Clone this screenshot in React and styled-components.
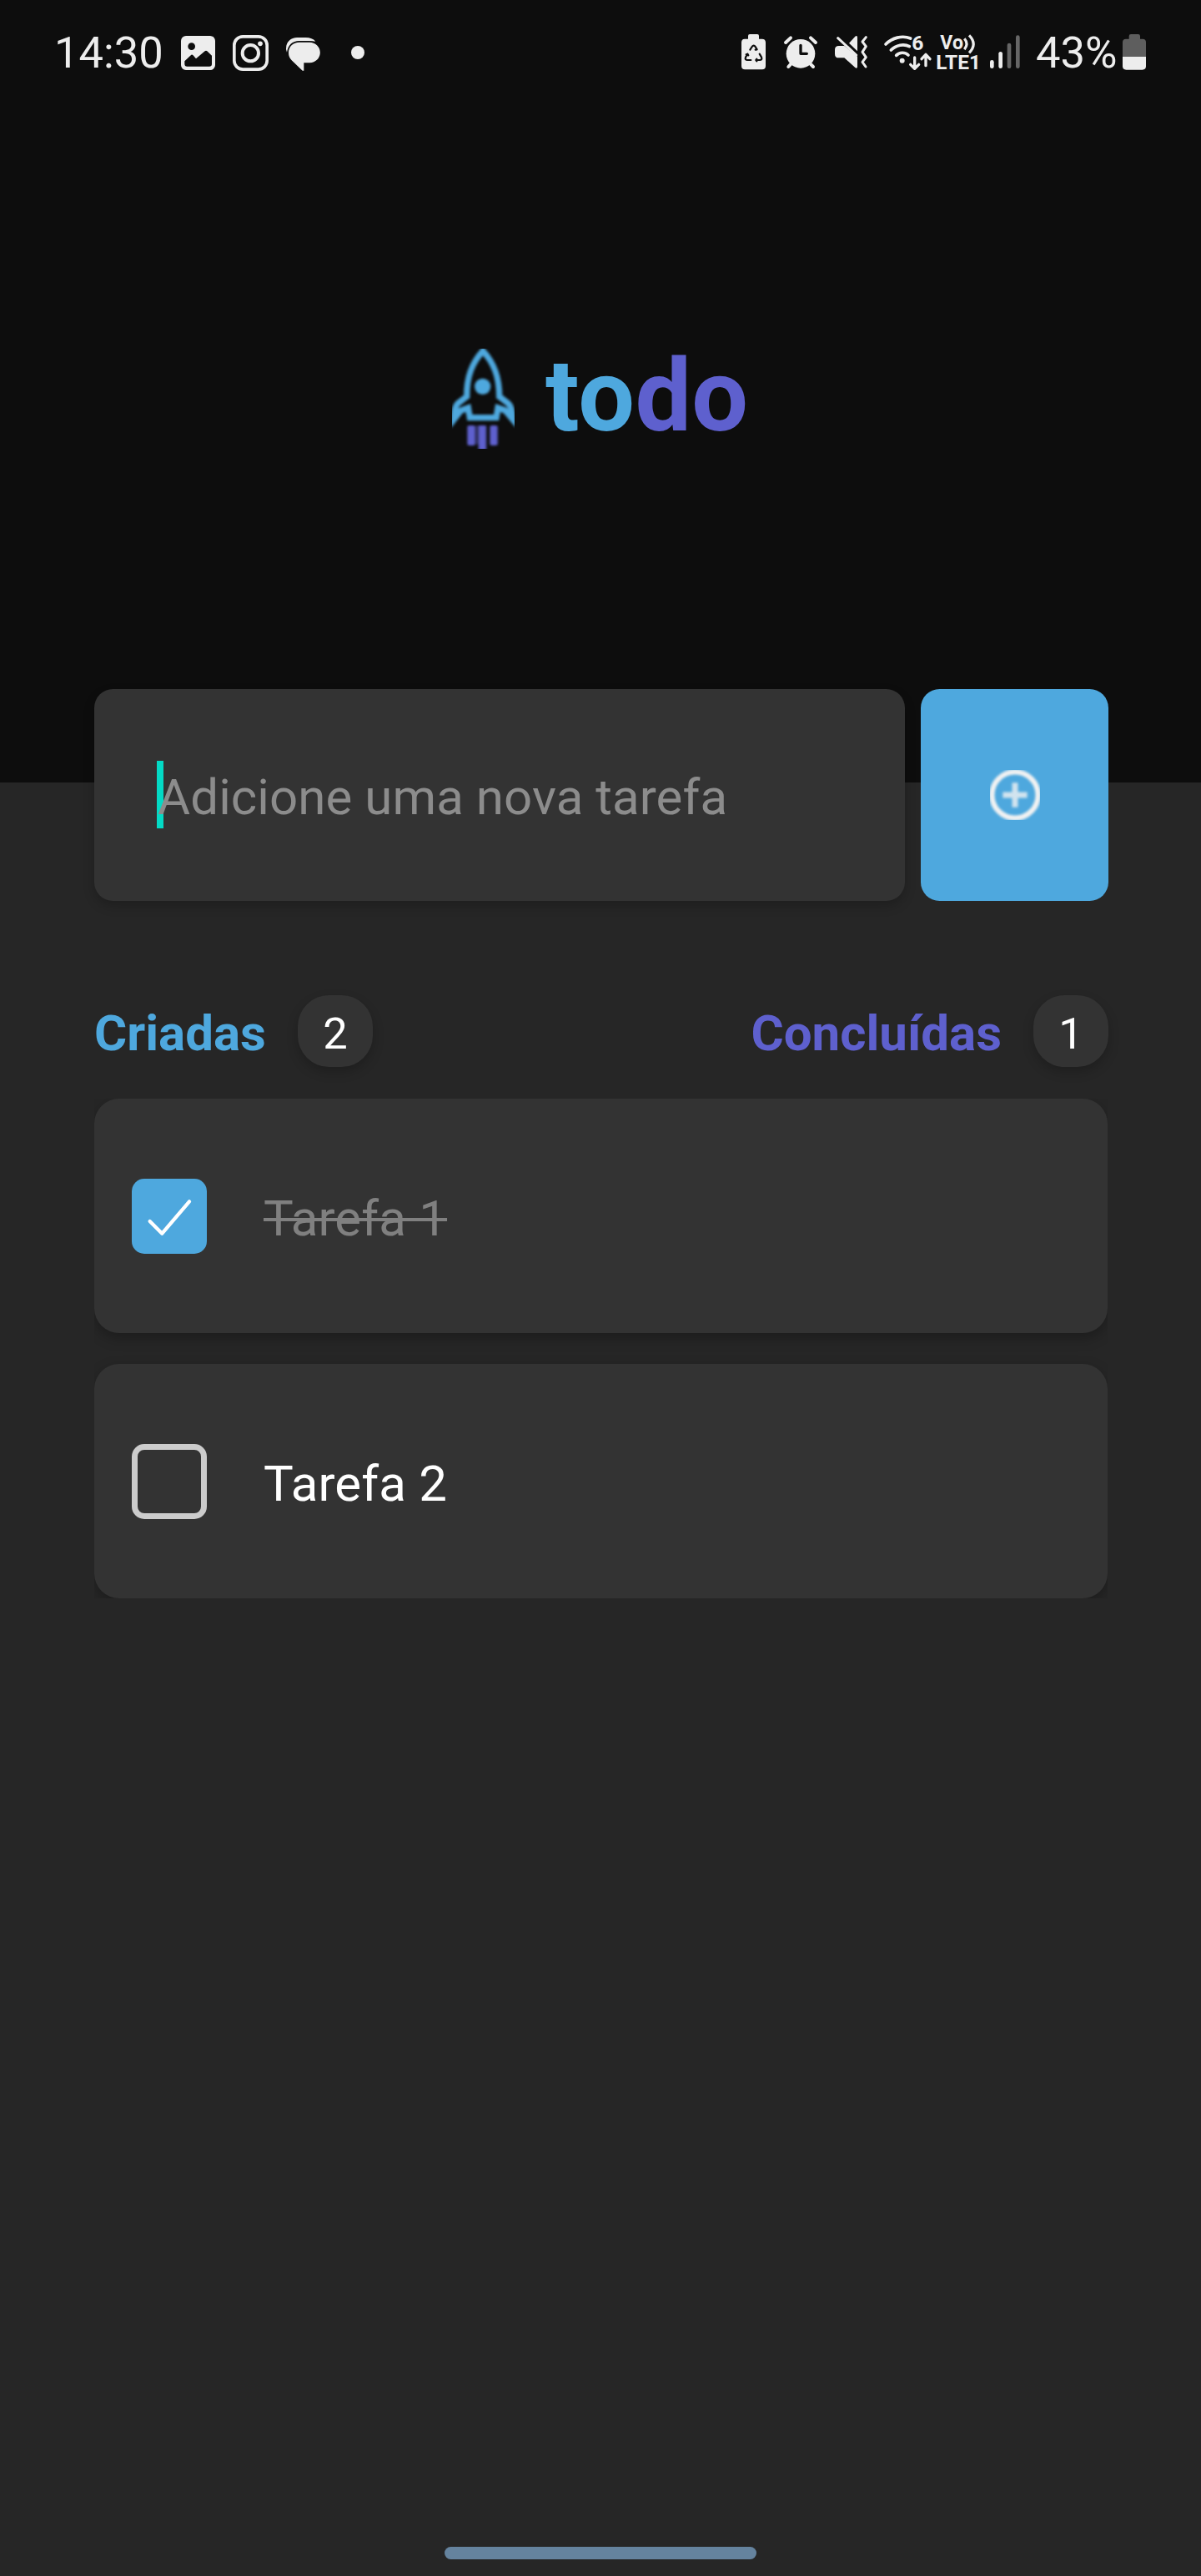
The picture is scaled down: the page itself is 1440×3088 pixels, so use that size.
import React from "react";
import styled, { createGlobalStyle } from "styled-components";

const colors = {
  header: "#0d0d0d",
  page: "#262626",
  surface: "#333333",
  blue: "#4ea8de",
  purple: "#5e60ce",
  muted: "#808080",
  status: "#ededed",
};

const GlobalStyle = createGlobalStyle`
  *, *::before, *::after { box-sizing: border-box; }
  html, body { margin: 0; background: ${colors.page}; }
  body { font-family: Roboto, "Liberation Sans", sans-serif; }
`;

const Screen = styled.div`
  width: 1440px;
  height: 3088px;
  display: flex;
  flex-direction: column;
  background: ${colors.page};
  overflow: hidden;
`;

const Header = styled.header`
  height: 938px;
  flex: none;
  background: ${colors.header};
`;

const StatusBar = styled.div`
  height: 126px;
  padding: 0 66px 0 65px;
  display: flex;
  align-items: center;
  justify-content: space-between;
  color: ${colors.status};
  font-size: 52.5px;
  line-height: 62px;
`;

const StatusGroup = styled.div`
  display: flex;
  align-items: center;
`;

const StatusText = styled.span`
  width: ${(p) => p.$width}px;
  margin-left: ${(p) => p.$gap || 0}px;
  white-space: nowrap;
`;

const Glyph = styled.svg`
  display: block;
  flex: none;
  height: 48px;
  width: ${(p) => p.$width}px;
  margin-left: ${(p) => p.$gap}px;
  overflow: visible;
  font-family: Roboto, "Liberation Sans", sans-serif;
`;

const Brand = styled.div`
  margin-top: 292px;
  padding-left: 542px;
  height: 120px;
  display: flex;
  align-items: center;
`;

const Rocket = styled.svg`
  width: 75px;
  height: 120px;
  overflow: hidden;
`;

const BrandName = styled.h1`
  margin: 0 0 6px 37px;
  font-size: 120px;
  line-height: 140px;
  font-weight: 700;
  letter-spacing: 0.3px;
  color: ${colors.purple};
`;

const BrandAccent = styled.span`
  color: ${colors.blue};
`;

const Content = styled.main`
  flex: 1;
  padding: 0 112px 0 113px;
  display: flex;
  flex-direction: column;
`;

const AddForm = styled.div`
  display: flex;
  gap: 19px;
  height: 254px;
  margin: -112px -1px 0 0;
`;

const Field = styled.div`
  position: relative;
  width: 972px;
  padding: 5px 0 0 76px;
  display: flex;
  align-items: center;
  border-radius: 22.5px;
  background: ${colors.surface};
  box-shadow: 0 6px 14px rgba(0, 0, 0, 0.2);
`;

const Caret = styled.span`
  position: absolute;
  left: 75px;
  top: 86px;
  width: 8px;
  height: 81px;
  background: #03dac5;
`;

const Placeholder = styled.span`
  position: relative;
  font-size: 60px;
  line-height: 70px;
  letter-spacing: 0.08px;
  color: #8c8c8c;
`;

const AddButton = styled.button`
  width: 225px;
  padding: 0;
  border: 0;
  border-radius: 22.5px;
  background: ${colors.blue};
  display: flex;
  align-items: center;
  justify-content: center;
`;

const PlusIcon = styled.svg`
  width: 60px;
  height: 60px;
`;

const Summary = styled.div`
  margin: 113px -1px 38px 0;
  height: 86px;
  display: flex;
  justify-content: space-between;
`;

const Counter = styled.div`
  display: flex;
  align-items: center;
  gap: 38px;
`;

const CounterLabel = styled.span`
  padding-top: 6px;
  font-size: 60px;
  line-height: 70px;
  font-weight: 700;
  color: ${(p) => p.$color};
`;

const Badge = styled.span`
  width: 90px;
  height: 86px;
  padding-top: 6px;
  display: flex;
  align-items: center;
  justify-content: center;
  border-radius: 37.5px;
  background: ${colors.surface};
  box-shadow: 0 6px 14px rgba(0, 0, 0, 0.2);
  font-size: 52.5px;
  line-height: 62px;
  color: #ffffff;
`;

const TaskList = styled.ul`
  margin: 0;
  padding: 0;
  list-style: none;
  display: flex;
  flex-direction: column;
  gap: 37px;
  overflow: hidden;
`;

const TaskCard = styled.li`
  height: 281px;
  padding-left: 45px;
  display: flex;
  align-items: center;
  border-radius: 30px;
  background: ${colors.surface};
  box-shadow: 0 6px 16px rgba(0, 0, 0, 0.26);
`;

const Checkbox = styled.span`
  width: 90px;
  height: 90px;
  flex: none;
  border-radius: 15px;
  border: ${(p) => (p.$checked ? "0" : "7.5px solid #cccccc")};
  background: ${(p) => (p.$checked ? colors.blue : "transparent")};
`;

const Check = styled.svg`
  display: block;
  width: 90px;
  height: 90px;
`;

const TaskTitle = styled.span`
  margin-left: 68px;
  padding-top: 6px;
  font-size: 60px;
  line-height: 70px;
  letter-spacing: 0.15px;
  color: ${(p) => (p.$done ? colors.muted : "#ffffff")};
  text-decoration: ${(p) => (p.$done ? "line-through" : "none")};
  text-decoration-thickness: 4px;
`;

const GestureArea = styled.footer`
  height: 35px;
  flex: none;
  display: flex;
  justify-content: center;
  align-items: flex-start;
`;

const GestureBar = styled.span`
  width: 374px;
  height: 15px;
  border-radius: 8px;
  background: #65839e;
`;

const ink = colors.status;
const dark = colors.header;
const line = { fill: "none", strokeLinecap: "round", strokeLinejoin: "round" };

function PictureGlyph() {
  return (
    <Glyph $width={41} $gap={21} viewBox="501 57 123 144">
      <rect x="501" y="69" width="123" height="123" rx="18" fill={ink} />
      <circle cx="539" cy="107" r="13" fill={dark} />
      <path d="M514 160L538 137Q541 135 544 138L555 151L587 124Q591 121 595 124L612 140V170Q612 179 603 179H523Q514 179 514 170Z" fill={dark} />
    </Glyph>
  );
}

function InstagramGlyph() {
  return (
    <Glyph $width={43} $gap={21} viewBox="687 57 129 144">
      <rect x="692.5" y="71.5" width="118" height="118" rx="31" {...line} stroke={ink} strokeWidth="11" />
      <circle cx="751" cy="131" r="29" {...line} stroke={ink} strokeWidth="12" />
      <circle cx="786" cy="97" r="8.5" fill={ink} />
    </Glyph>
  );
}

function ChatGlyph() {
  return (
    <Glyph $width={41} $gap={21} viewBox="879 57 123 144">
      <path d="M882 128Q877 116 880 104C885 86 900 75 918 75H950Q973 75 985 89Q975 87 962 87H926C902 87 886 102 882 128Z" fill={ink} />
      <path d="M927 92H963A38 37 0 0 1 964 166H943V194H938L899 157Q888 146 888 129C888 108 904 92 927 92Z" fill={ink} />
    </Glyph>
  );
}

function DotGlyph() {
  return (
    <Glyph $width={16} $gap={37} viewBox="1113 57 48 144">
      <circle cx="1137" cy="129" r="24" fill={ink} />
    </Glyph>
  );
}

function BatteryCareGlyph() {
  return (
    <Glyph $width={29} $gap={0} viewBox="54 57 87 144">
      <path d="M66 80H78V69Q78 63 84 63H111Q117 63 117 69V80H128Q141 80 141 93V177Q141 190 128 190H67Q54 190 54 177V93Q54 80 66 80Z" fill={ink} />
      <g {...line} stroke={dark} strokeWidth="6.5">
        <path d="M85 119L92 108Q98 100 104 108L110 118L104 119" />
        <path d="M76 134L69 146Q65 156 76 156H88M71 136L76 134L79 139" />
        <path d="M119 134L126 146Q130 156 119 156H106M109 152L106 156L109 160" />
      </g>
    </Glyph>
  );
}

function AlarmGlyph() {
  return (
    <Glyph $width={40} $gap={22} viewBox="207 57 120 144">
      <circle cx="267" cy="133" r="52" fill={ink} />
      <g {...line} stroke={ink} strokeWidth="12">
        <path d="M213 93L231 76M303 76L321 93" />
        <path d="M232 170L223 180M302 170L312 180" />
      </g>
      <path d="M267 103V133H289" {...line} stroke={dark} strokeWidth="10" />
    </Glyph>
  );
}

function MuteGlyph() {
  return (
    <Glyph $width={39} $gap={21} viewBox="390 57 117 144">
      <path d="M441 95L463 71Q471 66 471 75V124Z" fill={ink} />
      <path d="M404 105H424L471 143V181Q470 188 463 183L424 148H404Q390 148 390 134V119Q390 105 404 105Z" fill={ink} />
      <path d="M401 77L467 138" {...line} stroke={ink} strokeWidth="9" />
      <path d="M502 74L489 90L502 107L489 127L502 146L489 163L501 180" {...line} stroke={ink} strokeWidth="9" />
    </Glyph>
  );
}

function WifiGlyph() {
  return (
    <Glyph $width={56} $gap={20} viewBox="567 57 168 144">
      <g {...line} stroke={ink} strokeWidth="11">
        <path d="M573 99C596 76 632 66 662 78" />
        <path d="M592 120C610 102 638 96 658 107" />
        <path d="M611 139C623 127 642 127 654 138" />
      </g>
      <circle cx="632" cy="158" r="9" fill={ink} />
      <text x="667" y="121" fontSize="74" fontWeight="700" fill={ink}>6</text>
      <g {...line} stroke={ink} strokeWidth="10">
        <path d="M677 147V184M662 172L677 187L692 172" />
        <path d="M717 176V139M702 152L717 136L732 152" />
      </g>
    </Glyph>
  );
}

function VolteGlyph() {
  return (
    <Glyph $width={51} $gap={7} viewBox="39 57 153 144">
      <text x="52" y="118" fontSize="69" fontWeight="700" fill={ink} textLength="83">Vo</text>
      <g {...line} strokeLinecap="butt" stroke={ink} strokeWidth="9.5">
        <path d="M139 79Q155 98 139 118" />
        <path d="M156 67Q187 98 156 130" />
      </g>
      <text x="37" y="189" fontSize="73" fontWeight="700" fill={ink} textLength="161">LTE1</text>
    </Glyph>
  );
}

function SignalGlyph() {
  return (
    <Glyph $width={36} $gap={13} viewBox="230 57 108 144">
      <rect x="230" y="156" width="14" height="30" rx="7" fill={ink} />
      <rect x="261" y="126" width="14" height="60" rx="7" fill={ink} />
      <rect x="292" y="95" width="14" height="91" rx="7" fill="#666666" />
      <rect x="323" y="67" width="14" height="119" rx="7" fill="#666666" />
    </Glyph>
  );
}

function BatteryGlyph() {
  return (
    <Glyph $width={28} $gap={7} viewBox="708 57 84 144">
      <path d="M720 80H731V70Q731 63 738 63H764Q771 63 771 70V80H780Q792 80 792 92V144H708V92Q708 80 720 80Z" fill="#5e5e5e" />
      <path d="M708 144H792V178Q792 191 779 191H721Q708 191 708 178Z" fill={ink} />
    </Glyph>
  );
}

function RocketLogo() {
  return (
    <Rocket viewBox="66 54 225 360">
      <g style={{ filter: "blur(4px)" }}>
        <path
          d="M177 62C140 102 118 150 119 226L88 250Q73 263 73 308L98 276L124 267L130 302H225L231 267L257 276L284 308Q283 263 267 250L236 226C236 150 214 102 177 62Z"
          fill="none"
          stroke={colors.blue}
          strokeWidth="22"
          strokeLinejoin="miter"
        />
        <circle cx="176" cy="190" r="29" fill={colors.blue} />
        <g fill={colors.purple}>
          <rect x="149" y="330" width="13" height="68" opacity="0.4" />
          <rect x="121" y="330" width="28" height="72" rx="6" />
          <rect x="161" y="330" width="28" height="92" rx="4" />
          <rect x="202" y="330" width="28" height="72" rx="6" />
        </g>
      </g>
    </Rocket>
  );
}

const tasks = [
  { id: 1, title: "Tarefa 1", done: true },
  { id: 2, title: "Tarefa 2", done: false },
];

function Task({ title, done }) {
  return (
    <TaskCard>
      <Checkbox $checked={done}>
        {done && (
          <Check viewBox="174 759 270 270">
            <path d="M239 912L283 956L381 841" {...line} stroke="#ffffff" strokeWidth="13" />
          </Check>
        )}
      </Checkbox>
      <TaskTitle $done={done}>{title}</TaskTitle>
    </TaskCard>
  );
}

export default function App() {
  const doneCount = tasks.filter((t) => t.done).length;
  return (
    <Screen>
      <GlobalStyle />
      <Header>
        <StatusBar>
          <StatusGroup>
            <StatusText $width={131}>14:30</StatusText>
            <PictureGlyph />
            <InstagramGlyph />
            <ChatGlyph />
            <DotGlyph />
          </StatusGroup>
          <StatusGroup>
            <BatteryCareGlyph />
            <AlarmGlyph />
            <MuteGlyph />
            <WifiGlyph />
            <VolteGlyph />
            <SignalGlyph />
            <StatusText $width={97} $gap={19}>43%</StatusText>
            <BatteryGlyph />
          </StatusGroup>
        </StatusBar>
        <Brand>
          <RocketLogo />
          <BrandName>
            <BrandAccent>to</BrandAccent>do
          </BrandName>
        </Brand>
      </Header>
      <Content>
        <AddForm>
          <Field>
            <Caret />
            <Placeholder>Adicione uma nova tarefa</Placeholder>
          </Field>
          <AddButton aria-label="Adicionar">
            <PlusIcon viewBox="441 369 180 180">
              <g style={{ filter: "blur(4px)" }} fill="none" stroke="#f2f2f2">
                <circle cx="531" cy="459" r="83" strokeWidth="19" />
                <path d="M531 415V503M487 459H575" strokeWidth="21" strokeOpacity="0.8" />
              </g>
            </PlusIcon>
          </AddButton>
        </AddForm>
        <Summary>
          <Counter>
            <CounterLabel $color={colors.blue}>Criadas</CounterLabel>
            <Badge>{tasks.length}</Badge>
          </Counter>
          <Counter>
            <CounterLabel $color={colors.purple}>Concluídas</CounterLabel>
            <Badge>{doneCount}</Badge>
          </Counter>
        </Summary>
        <TaskList>
          {tasks.map((t) => (
            <Task key={t.id} title={t.title} done={t.done} />
          ))}
        </TaskList>
      </Content>
      <GestureArea>
        <GestureBar />
      </GestureArea>
    </Screen>
  );
}
